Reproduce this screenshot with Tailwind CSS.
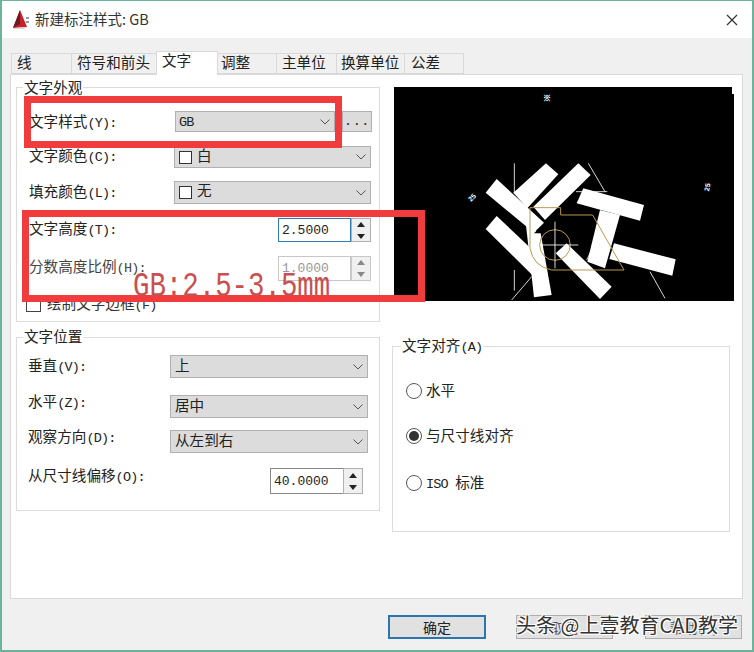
<!DOCTYPE html>
<html lang="zh-CN">
<head>
    <meta charset="UTF-8">
    <title>新建标注样式: GB</title>
    <script src="https://cdn.jsdelivr.net/npm/@tailwindcss/browser@4"></script>
</head>
<body class="bg-white">
<div class="relative w-[754px] h-[652px] overflow-hidden flex flex-col border-x-2 border-t border-b-2 border-[#6db39b] bg-[#f0f0f0] text-[#222] font-['Liberation_Mono','Noto_Sans_CJK_SC',monospace] text-[14.6px] leading-none">

    <!-- Title bar -->
    <div class="h-[37px] shrink-0 bg-white flex items-center pl-[10px] pr-[14px] font-['Noto_Sans_CJK_SC',sans-serif] text-[14.5px]">
        <svg class="w-[18px] h-[20px]" viewBox="0 0 18 20">
            <polygon points="8,0 15,17 1,18" fill="#c8202a"/>
            <polygon points="8,0 1,18 8,14" fill="#6a1a20"/>
            <polygon points="1,18 15,17 12,19 3,19" fill="#d8d8d8"/>
            <rect x="14" y="7" width="3" height="2" fill="#999"/>
            <rect x="14" y="11" width="3" height="2" fill="#999"/>
        </svg>
        <span class="ml-[5px] text-[#333]">新建标注样式: GB</span>
        <svg class="ml-auto w-[12px] h-[12px]" viewBox="0 0 12 12" fill="none" stroke="#333" stroke-width="1.2">
            <path d="M1 1 L11 11 M11 1 L1 11"/>
        </svg>
    </div>

    <div class="flex-1 flex flex-col pl-[8px]">
        <!-- Tabs -->
        <div class="flex items-end h-[36px] pl-[1px] text-[14.6px]">
            <div class="w-[60px] h-[21px] pl-[5px] pt-px flex items-center border-y border-l border-[#d9d9d9]">线</div>
            <div class="w-[85px] h-[21px] pl-[5px] pt-px flex items-center border-y border-l border-[#d9d9d9]">符号和前头</div>
            <div class="relative z-10 -mb-px w-[62px] h-[24px] pl-[5px] pb-[3px] flex items-center bg-white border-x border-t border-[#d9d9d9]">文字</div>
            <div class="w-[58px] h-[21px] pl-[3px] pt-px flex items-center border-y border-[#d9d9d9]">调整</div>
            <div class="w-[60px] h-[21px] pl-[5px] pt-px flex items-center border-y border-l border-[#d9d9d9]">主单位</div>
            <div class="w-[68px] h-[21px] pl-[4px] pt-px flex items-center border-y border-l border-[#d9d9d9]">换算单位</div>
            <div class="w-[60px] h-[21px] pl-[6px] pt-px flex items-center border border-[#d9d9d9]">公差</div>
        </div>

        <!-- Panel -->
        <div class="w-[733px] h-[525px] shrink-0 bg-white border border-[#d9d9d9] flex pl-[5px] pt-[12px]">
            <!-- Left column -->
            <div class="w-[364px] shrink-0">
                <div class="relative h-[235px] border border-[#dcdcdc] pl-[12px] pt-[23px]">
                    <span class="absolute -top-[6px] left-[6px] bg-white px-px">文字外观</span>
                    <div class="flex items-center h-[21px]">
                        <span class="pt-[3px]">文字样式<span class="text-[13.5px] tracking-[-0.8px]">(Y):</span></span>
                        <div class="absolute left-[158px] w-[160px] h-[21px] flex items-center justify-between pl-[3px] pr-[4px] bg-[#dcdcdc] border border-[#b0b0b0]">
                            <span class="text-[13.5px] tracking-[-0.8px] pt-[2px]">GB</span>
                            <svg class="w-[10px] h-[6px]" viewBox="0 0 10 6" fill="none" stroke="#555"><path d="M0.5 0.5 L5 5 L9.5 0.5"/></svg>
                        </div>
                        <div class="absolute left-[325px] w-[30px] h-[21px] flex items-center justify-center bg-[#dcdcdc] border border-[#b0b0b0] text-[13.5px] tracking-[0.5px]">...</div>
                    </div>
                    <div class="flex items-center h-[22px] mt-[14px]">
                        <span class="w-[145px]">文字颜色<span class="text-[13.5px] tracking-[-0.8px]">(C):</span></span>
                        <div class="w-[197px] h-[22px] flex items-center pl-[4px] pr-[4px] bg-[#dcdcdc] border border-[#b0b0b0]">
                            <span class="w-[13px] h-[13px] border border-[#333] bg-white mr-[5px]"></span><span>白</span>
                            <svg class="ml-auto w-[10px] h-[6px]" viewBox="0 0 10 6" fill="none" stroke="#555"><path d="M0.5 0.5 L5 5 L9.5 0.5"/></svg>
                        </div>
                    </div>
                    <div class="flex items-center h-[23px] mt-[13px]">
                        <span class="w-[145px] pt-[2px]">填充颜色<span class="text-[13.5px] tracking-[-0.8px]">(L):</span></span>
                        <div class="w-[197px] h-[23px] flex items-center pl-[4px] pr-[4px] bg-[#dcdcdc] border border-[#b0b0b0]">
                            <span class="w-[13px] h-[13px] border border-[#333] bg-white mr-[5px]"></span><span>无</span>
                            <svg class="ml-auto w-[10px] h-[6px]" viewBox="0 0 10 6" fill="none" stroke="#555"><path d="M0.5 0.5 L5 5 L9.5 0.5"/></svg>
                        </div>
                    </div>
                    <div class="flex items-center h-[24px] mt-[14px]">
                        <span class="w-[249px]">文字高度<span class="text-[13.5px] tracking-[-0.8px]">(T):</span></span>
                        <div class="w-[73px] h-[24px] flex items-center pl-[3px] border border-[#2f7fb5] text-[13px]">2.5000</div>
                        <div class="w-[20px] h-[24px] flex flex-col justify-center gap-px border border-[#b0b0b0] bg-[#f0f0f0]">
                            <svg class="w-[18px] h-[10px]" viewBox="0 0 18 10"><polygon points="9,2 13,7 5,7" fill="#222"/></svg>
                            <svg class="w-[18px] h-[10px]" viewBox="0 0 18 10"><polygon points="9,8 13,3 5,3" fill="#222"/></svg>
                        </div>
                    </div>
                    <div class="flex items-center h-[25px] mt-[14px]">
                        <span class="w-[249px] text-[#444]">分数高度比例<span class="text-[13.5px] tracking-[-0.8px]">(H):</span></span>
                        <div class="w-[73px] h-[25px] flex items-center pl-[3px] border border-[#c8c8c8] text-[13px] text-[#999]">1.0000</div>
                        <div class="w-[20px] h-[25px] flex flex-col justify-center gap-px border border-[#c8c8c8] bg-[#f0f0f0]">
                            <svg class="w-[18px] h-[10px]" viewBox="0 0 18 10"><polygon points="9,2 13,7 5,7" fill="#888"/></svg>
                            <svg class="w-[18px] h-[10px]" viewBox="0 0 18 10"><polygon points="9,8 13,3 5,3" fill="#888"/></svg>
                        </div>
                    </div>
                    <div class="flex items-center h-[15px] mt-[16px] -ml-[3px]">
                        <span class="w-[15px] h-[14px] border border-[#444] mr-[6px]"></span>
                        <span class="text-[#333] pt-[2px]">绘制文字边框<span class="text-[13.5px] tracking-[-0.8px]">(F)</span></span>
                    </div>
                </div>

                <div class="relative h-[174px] mt-[15px] border border-[#dcdcdc] pl-[11px] pt-[17px]">
                    <span class="absolute -top-[7px] left-[6px] bg-white px-px">文字位置</span>
                    <div class="flex items-center h-[23px]">
                        <span class="w-[142px] pt-px">垂直<span class="text-[13.5px] tracking-[-0.8px]">(V):</span></span>
                        <div class="w-[198px] h-[23px] flex items-center pl-[4px] pr-[4px] bg-[#dcdcdc] border border-[#b0b0b0]">
                            <span class="pt-[2px]">上</span>
                            <svg class="ml-auto w-[10px] h-[6px]" viewBox="0 0 10 6" fill="none" stroke="#555"><path d="M0.5 0.5 L5 5 L9.5 0.5"/></svg>
                        </div>
                    </div>
                    <div class="flex items-center h-[23px] mt-[17px]">
                        <span class="w-[142px] -translate-y-[3px]">水平<span class="text-[13.5px] tracking-[-0.8px]">(Z):</span></span>
                        <div class="w-[198px] h-[23px] flex items-center pl-[4px] pr-[4px] bg-[#dcdcdc] border border-[#b0b0b0]">
                            <span class="pt-[2px]">居中</span>
                            <svg class="ml-auto w-[10px] h-[6px]" viewBox="0 0 10 6" fill="none" stroke="#555"><path d="M0.5 0.5 L5 5 L9.5 0.5"/></svg>
                        </div>
                    </div>
                    <div class="flex items-center h-[23px] mt-[12px]">
                        <span class="w-[142px] -translate-y-[3px]">观察方向<span class="text-[13.5px] tracking-[-0.8px]">(D):</span></span>
                        <div class="w-[198px] h-[23px] flex items-center pl-[4px] pr-[4px] bg-[#dcdcdc] border border-[#b0b0b0]">
                            <span class="pt-[2px]">从左到右</span>
                            <svg class="ml-auto w-[10px] h-[6px]" viewBox="0 0 10 6" fill="none" stroke="#555"><path d="M0.5 0.5 L5 5 L9.5 0.5"/></svg>
                        </div>
                    </div>
                    <div class="flex items-center h-[26px] mt-[15px]">
                        <span class="w-[242px] -translate-y-[4px]">从尺寸线偏移<span class="text-[13.5px] tracking-[-0.8px]">(O):</span></span>
                        <div class="w-[73px] h-[26px] flex items-center pl-[3px] border-y border-l border-[#888] text-[13px]">40.0000</div>
                        <div class="w-[20px] h-[26px] flex flex-col justify-center gap-px border border-[#b0b0b0] bg-[#f0f0f0]">
                            <svg class="w-[18px] h-[10px]" viewBox="0 0 18 10"><polygon points="9,2 13,7 5,7" fill="#222"/></svg>
                            <svg class="w-[18px] h-[10px]" viewBox="0 0 18 10"><polygon points="9,8 13,3 5,3" fill="#222"/></svg>
                        </div>
                    </div>
                </div>
            </div>

            <!-- Right column -->
            <div class="ml-[14px] w-[340px] shrink-0">
                <!-- Preview -->
                <svg class="block w-[340px] h-[214px] bg-black" viewBox="0 0 340 214">
                    <polygon points="338,0 340,0 340,7 338,7" fill="#fff"/>
                    <text x="149" y="14" font-size="8" font-weight="700" fill="#fff" font-family="Liberation Sans">※</text>
                    <text x="308" y="102" font-size="7" font-weight="700" fill="#fff" font-family="Liberation Sans" transform="rotate(-80 313 99)">25</text>
                    <text x="74" y="112" font-size="7" font-weight="700" fill="#fff" font-family="Liberation Sans" transform="rotate(-45 79 110)">25</text>
                    <g transform="translate(76 83) scale(0.3333)">
                        <g stroke="#fff" stroke-width="2.5" fill="none">
                            <path d="M133 -20 L133 70 M133 300 L133 362 M355 -20 L405 65 M318 65 L412 65 M540 305 L585 385 M185 320 L125 390 M350 270 L365 240"/>
                        </g>
                        <g fill="#fff">
                            <polygon points="47,68 80,27 222,158 190,190 172,172"/>
                            <polygon points="228,-20 265,13 172,115 130,68"/>
                            <polygon points="325,-20 362,15 225,150 190,110"/>
                            <polygon points="80,138 47,177 192,320 215,270 172,225"/>
                            <polygon points="168,165 212,190 245,375 192,382"/>
                            <polygon points="257,250 290,220 425,350 390,387"/>
                            <polygon points="320,100 340,55 522,105 510,152"/>
                            <polygon points="390,120 450,135 405,295 352,275"/>
                            <polygon points="432,220 617,268 607,317 418,267"/>
                        </g>
                        <polygon points="192,190 225,158 270,115 275,135 250,170 212,190" fill="#000"/>
                        <g stroke="#b89a50" stroke-width="3" fill="none">
                            <path d="M180 113 L272 113 L272 135 L368 135 L462 300 L245 300 Q190 290 180 235 Z"/>
                            <circle cx="255" cy="225" r="46"/>
                        </g>
                        <path d="M255 155 L255 295 M210 225 L325 225" stroke="#fff" stroke-width="2.5" fill="none"/>
                    </g>
                </svg>

                <div class="relative w-[338px] h-[186px] mt-[45px] -ml-[2px] border border-[#dcdcdc] pl-[13px] pt-[36px]">
                    <span class="absolute -top-[7px] left-[8px] bg-white px-px">文字对齐<span class="text-[13.5px] tracking-[-0.8px]">(A)</span></span>
                    <div class="flex items-center h-[16px]">
                        <span class="w-[16px] h-[16px] rounded-full border border-[#555] mr-[4px]"></span>
                        <span class="pt-[2px]">水平</span>
                    </div>
                    <div class="flex items-center h-[16px] mt-[29px]">
                        <span class="w-[16px] h-[16px] rounded-full border border-[#555] mr-[4px] flex items-center justify-center"><span class="w-[10px] h-[10px] rounded-full bg-[#333]"></span></span>
                        <span class="pt-[2px]">与尺寸线对齐</span>
                    </div>
                    <div class="flex items-center h-[16px] mt-[31px]">
                        <span class="w-[16px] h-[16px] rounded-full border border-[#555] mr-[4px]"></span>
                        <span class="pt-[2px]"><span class="text-[13.5px] tracking-[-0.8px]">ISO </span>标准</span>
                    </div>
                </div>
            </div>
        </div>

        <!-- Footer buttons -->
        <div class="flex pl-[378px] pt-[16px] text-[14px] font-['Noto_Sans_CJK_SC',sans-serif]">
            <div class="w-[98px] h-[24px] pb-px flex items-center justify-center bg-[#e1e1e1] border-2 border-[#2a76b0]">确定</div>
            <div class="w-[97px] h-[24px] ml-[30px] flex items-center justify-center bg-[#e1e1e1] border border-[#adadad] text-[#555]">取消</div>
            <div class="w-[97px] h-[24px] ml-[32px] flex items-center justify-center bg-[#e1e1e1] border border-[#adadad] text-[#555]">帮助(H)</div>
        </div>
    </div>

    <!-- Red annotations drawn over the dialog -->
    <div class="absolute left-[22px] top-[95px] w-[318px] h-[52px] border-[7px] border-[#f03c3c]"></div>
    <div class="absolute left-[20px] top-[209px] w-[403px] h-[92px] border-[7px] border-[#f03c3c]"></div>
    <span class="absolute left-[131px] top-[272px] text-[27.4px] leading-none scale-y-[1.3] text-[#c85050] font-['Liberation_Mono',monospace]">GB:2.5-3.5mm</span>

    <!-- Watermark -->
    <span class="absolute left-[514px] top-[612px] text-[20px] leading-[24px] text-[#333] font-['Noto_Sans_CJK_SC',sans-serif] [text-shadow:1px_1px_0_#fff,-1px_-1px_0_#fff,1px_-1px_0_#fff,-1px_1px_0_#fff]">头条 @上壹教育CAD教学</span>
</div>
</body>
</html>
